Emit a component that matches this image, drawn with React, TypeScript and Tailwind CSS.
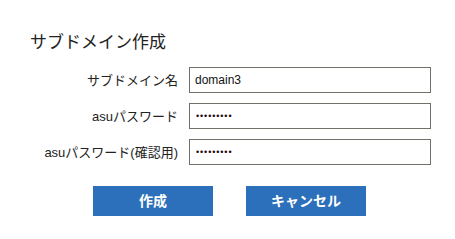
import React from 'react';

const rows = [
  { label: 'サブドメイン名', type: 'text', value: 'domain3' },
  { label: 'asuパスワード', type: 'password', value: 'password1' },
  { label: 'asuパスワード(確認用)', type: 'password', value: 'password1' },
];

export default function App() {
  return (
    <div className="w-[455px] h-[239px] bg-white pl-[30px] pt-[31px] text-[#222] font-['Liberation_Sans','Noto_Sans_CJK_JP',sans-serif]">
      <h1 className="text-[17px] leading-[24px] font-normal">サブドメイン作成</h1>

      <div className="mt-[12px] flex flex-col gap-[10px]">
        {rows.map((row) => (
          <div key={row.label} className="flex items-center">
            <label className="w-[148px] shrink-0 text-right text-[13px] leading-none">{row.label}</label>
            <input
              type={row.type}
              readOnly
              value={row.value}
              className={
                row.type === 'password'
                  ? "ml-[11px] w-[242px] shrink-0 h-[26px] border border-[#707068] px-[6px] text-[9px] tracking-[0.9px] text-[#220808] outline-none font-['Liberation_Sans',sans-serif]"
                  : "ml-[11px] w-[242px] shrink-0 h-[26px] border border-[#707068] px-[5px] text-[12px] text-[#111] outline-none font-['Liberation_Sans',sans-serif]"
              }
            />
          </div>
        ))}
      </div>

      <div className="mt-[21px] ml-[63px] flex gap-[33px]">
        <button className="w-[120px] h-[30px] bg-[#2c6fba] text-white text-[14px] font-bold">作成</button>
        <button className="w-[120px] h-[30px] bg-[#2c6fba] text-white text-[14px] font-bold">キャンセル</button>
      </div>
    </div>
  );
}
